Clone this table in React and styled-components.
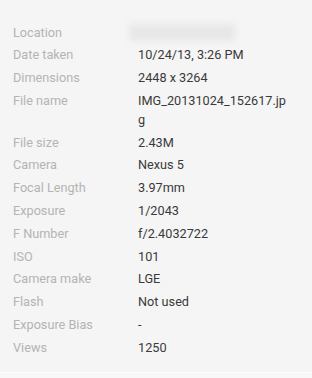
import React from 'react'
import styled, { createGlobalStyle } from 'styled-components'

const GlobalStyle = createGlobalStyle`
  html, body {
    margin: 0;
    padding: 0;
    background: #f8f8f8;
  }
`

const Panel = styled.div`
  width: 312px;
  height: 373px;
  box-sizing: border-box;
  padding: 22.5px 0 0 13px;
  background: #f5f5f5;
  border-bottom: 1px solid #fdfdfd;
  font-family: Roboto, 'Liberation Sans', sans-serif;
  font-size: 12.7px;
`

const Table = styled.div`
  display: grid;
  grid-template-columns: 125px 152px;
  row-gap: 3.8px;
`

const Label = styled.div`
  color: #b4b4b4;
  line-height: 19px;
`

const Value = styled.div`
  color: #3a3a3a;
  line-height: 19px;
  overflow-wrap: anywhere;
`

const Blurred = styled.div`
  width: 106px;
  height: 17px;
  margin: 1px 0 0 -9px;
  background: #e7e7e7;
  filter: blur(3px);
`

const rows = [
  ['Date taken', '10/24/13, 3:26 PM'],
  ['Dimensions', '2448 x 3264'],
  ['File name', 'IMG_20131024_152617.jpg'],
  ['File size', '2.43M'],
  ['Camera', 'Nexus 5'],
  ['Focal Length', '3.97mm'],
  ['Exposure', '1/2043'],
  ['F Number', 'f/2.4032722'],
  ['ISO', '101'],
  ['Camera make', 'LGE'],
  ['Flash', 'Not used'],
  ['Exposure Bias', '-'],
  ['Views', '1250'],
]

export default function App() {
  return (
    <>
      <GlobalStyle />
      <Panel>
        <Table>
          <Label>Location</Label>
          <Blurred />
          {rows.map(([label, value]) => (
            <React.Fragment key={label}>
              <Label>{label}</Label>
              <Value>{value}</Value>
            </React.Fragment>
          ))}
        </Table>
      </Panel>
    </>
  )
}
